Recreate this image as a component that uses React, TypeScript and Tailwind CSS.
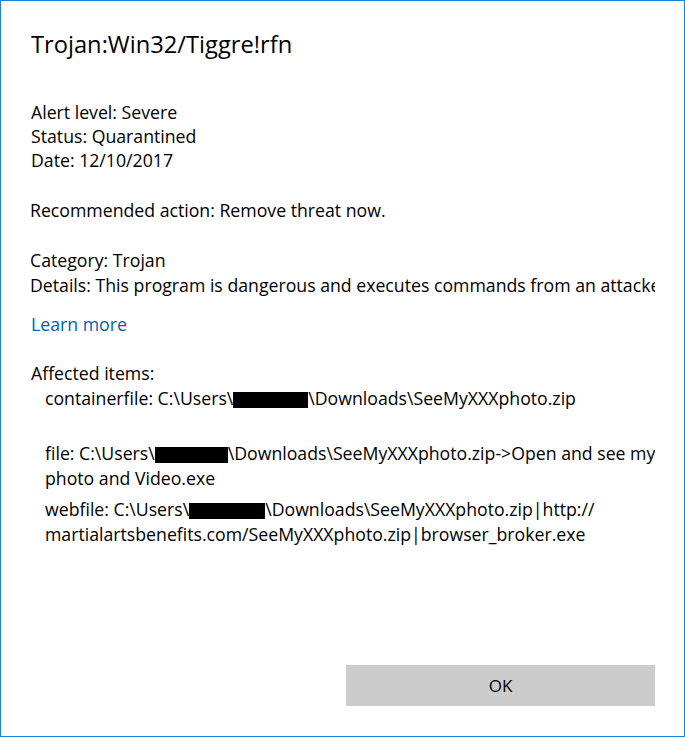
const Redacted = ({ w }: { w: string }) => (
  <span className={`inline-block h-[16px] bg-black align-[-3px] ${w}`} />
);

export default function App() {
  return (
    <div
      className="w-[685px] h-[737px] bg-white border border-[#1883d7] flex flex-col text-black"
      style={{ fontFamily: '"Open Sans", "Noto Sans", sans-serif' }}
    >
      <div className="flex-1 pl-[30px] pr-[29px]">
        <div className="overflow-hidden">
          <h1 className="mt-[29px] text-[23.7px] leading-[28px]">Trojan:Win32/Tiggre!rfn</h1>

          <div className="mt-[42px] text-[17.7px] leading-[24px]">
            <p>Alert level: Severe</p>
            <p>Status: Quarantined</p>
            <p>Date: 12/10/2017</p>
          </div>

          <div className="text-[17.7px] -ml-px whitespace-nowrap">
            <p className="mt-[26px] leading-[24px]">Recommended action: Remove threat now.</p>
            <div className="mt-[26px] leading-[25px]">
              <p>Category: Trojan</p>
              <p>Details: This program is dangerous and executes commands from an attacker.</p>
            </div>
          </div>

          <p className="mt-[14px] text-[17.7px] leading-[24px] text-[#0063b1]">Learn more</p>

          <div className="mt-[25px] text-[17.7px] leading-[25px]">
            <p>Affected items:</p>
            <div className="pl-[14px] whitespace-nowrap">
              <p>
                containerfile: C:\Users\<Redacted w="w-[75px]" />\Downloads\SeeMyXXXphoto.zip
              </p>
              <p className="mt-[30px]">
                file: C:\Users\<Redacted w="w-[73px]" />\Downloads\SeeMyXXXphoto.zip-&gt;Open and see my
              </p>
              <p>photo and Video.exe</p>
              <p className="mt-[6px]">
                webfile: C:\Users\<Redacted w="w-[76px]" />\Downloads\SeeMyXXXphoto.zip|http://
              </p>
              <p>martialartsbenefits.com/SeeMyXXXphoto.zip|browser_broker.exe</p>
            </div>
          </div>
        </div>
      </div>

      <div className="flex justify-end pr-[29px] pb-[30px]">
        <button className="w-[309px] h-[41px] bg-[#cccccc] text-[17px] text-black">OK</button>
      </div>
    </div>
  );
}
